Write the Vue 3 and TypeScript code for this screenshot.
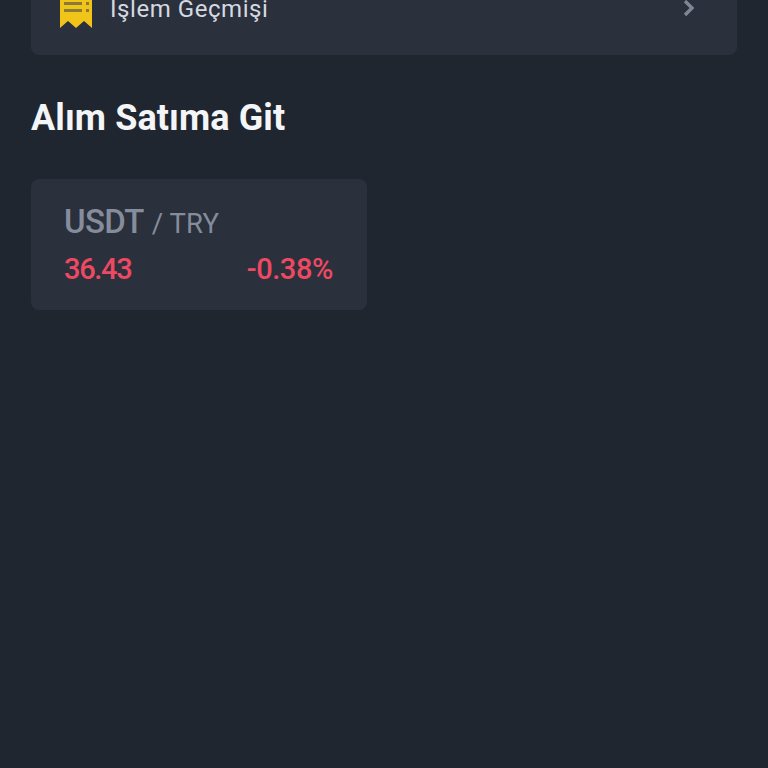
<script setup lang="ts">
const pair = { base: 'USDT', quote: '/ TRY', price: '36.43', change: '-0.38%' }
</script>

<template>
  <div class="page">
    <div class="history">
      <svg class="icon" width="34" height="29" viewBox="0 0 34 29">
        <path d="M1 0H33V28L25 21L17 28L9 21L1 28Z" fill="#f0c419" />
        <path d="M5 2H23V5H5ZM5 9H23V12H5ZM27 2H30V5H27ZM27 9H30V12H27Z" fill="#8a7a35" />
      </svg>
      <span class="history-label">İşlem Geçmişi</span>
      <svg class="chevron" width="14" height="18" viewBox="0 0 14 18">
        <path d="M3 2L10 9L3 16" fill="none" stroke="#7f8694" stroke-width="3.4" />
      </svg>
    </div>
    <h2 class="title">Alım Satıma Git</h2>
    <div class="card">
      <div class="pair"><span class="base">{{ pair.base }}</span><span class="quote">{{ pair.quote }}</span></div>
      <div class="row">
        <span class="price">{{ pair.price }}</span>
        <span class="change">{{ pair.change }}</span>
      </div>
    </div>
  </div>
</template>

<style>
html, body { margin: 0; background: #1f2630; }
</style>

<style scoped>
.page {
  width: 768px;
  height: 768px;
  overflow: hidden;
  box-sizing: border-box;
  padding: 0 31px;
  background: #1f2630;
  font-family: Roboto, "Noto Sans", sans-serif;
}
.history {
  display: flex;
  align-items: flex-start;
  height: 55px;
  padding: 0 41px 0 28px;
  box-sizing: border-box;
  background: #2a303c;
  border-radius: 0 0 8px 8px;
}
.icon { flex: none; }
.history-label {
  margin-left: 17px;
  margin-top: -5px;
  font-size: 24px;
  line-height: 28px;
  letter-spacing: 0.55px;
  color: #d5d9e0;
}
.chevron { margin-left: auto; margin-top: -1px; }
.title {
  margin: 43px 0 0;
  font-size: 36px;
  line-height: 40px;
  font-weight: 700;
  letter-spacing: 0.1px;
  color: #f3f5f7;
}
.card {
  width: 336px;
  height: 131px;
  margin-top: 41px;
  box-sizing: border-box;
  padding: 24px 34px 0 33px;
  background: #2a303c;
  border-radius: 8px;
}
.pair { display: flex; align-items: baseline; line-height: 38px; color: #858c9b; }
.base { font-size: 33px; font-weight: 500; letter-spacing: -0.7px; }
.quote { margin-left: 8px; font-size: 27.5px; letter-spacing: 0.1px; }
.row {
  display: flex;
  justify-content: space-between;
  margin-top: 9px;
  font-size: 29px;
  line-height: 34px;
  font-weight: 500;
  color: #ee4862;
}
.price { letter-spacing: -1.3px; }
.change { letter-spacing: -0.4px; }
</style>
